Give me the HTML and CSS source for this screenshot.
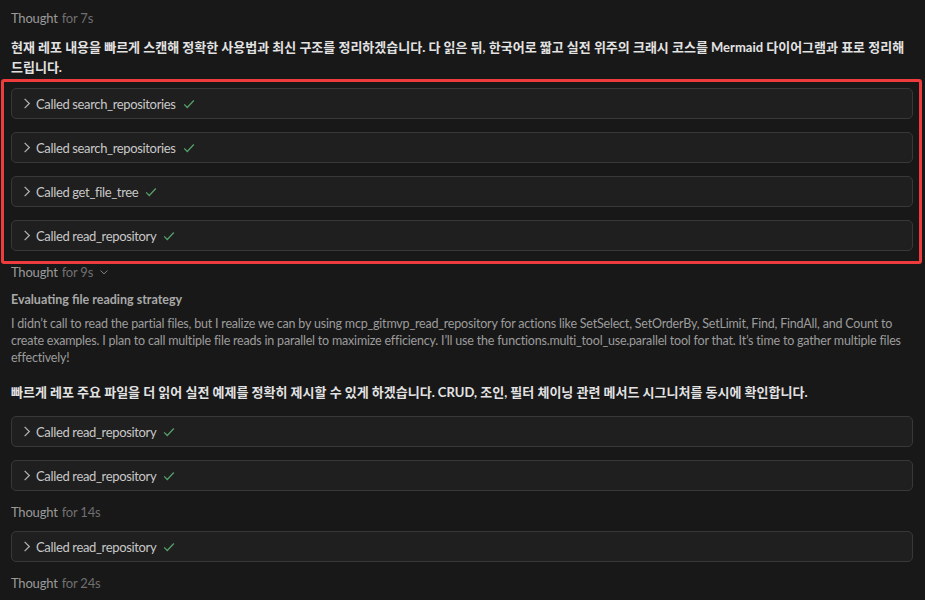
FILE: index.html
```html
<!DOCTYPE html>
<html lang="ko">
<head>
<meta charset="utf-8">
<link rel="stylesheet" href="styles.css">
</head>
<body>
<div class="chat">
  <div class="thought">Thought <span class="dur">for 7s</span></div>
  <p class="msg">현재 레포 내용을 빠르게 스캔해 정확한 사용법과 최신 구조를 정리하겠습니다. 다 읽은 뒤, 한국어로 짧고 실전 위주의 크래시 코스를 Mermaid 다이어그램과 표로 정리해 드립니다.</p>
  <div class="highlight">
    <div class="call"><svg class="chev" viewBox="0 0 16 16"><path d="M6 3 L11 8 L6 13"/></svg><span>Called search_repositories</span><svg class="check" viewBox="0 0 16 16"><path d="M2.5 8.5 L6 12 L13.5 4"/></svg></div>
    <div class="call"><svg class="chev" viewBox="0 0 16 16"><path d="M6 3 L11 8 L6 13"/></svg><span>Called search_repositories</span><svg class="check" viewBox="0 0 16 16"><path d="M2.5 8.5 L6 12 L13.5 4"/></svg></div>
    <div class="call"><svg class="chev" viewBox="0 0 16 16"><path d="M6 3 L11 8 L6 13"/></svg><span>Called get_file_tree</span><svg class="check" viewBox="0 0 16 16"><path d="M2.5 8.5 L6 12 L13.5 4"/></svg></div>
    <div class="call"><svg class="chev" viewBox="0 0 16 16"><path d="M6 3 L11 8 L6 13"/></svg><span>Called read_repository</span><svg class="check" viewBox="0 0 16 16"><path d="M2.5 8.5 L6 12 L13.5 4"/></svg></div>
  </div>
  <div class="thought">Thought <span class="dur">for 9s</span><svg class="down" viewBox="0 0 16 16"><path d="M3.5 6 L8 10.5 L12.5 6"/></svg></div>
  <div class="reason-title">Evaluating file reading strategy</div>
  <p class="reason">I didn’t call to read the partial files, but I realize we can by using mcp_gitmvp_read_repository for actions like SetSelect, SetOrderBy, SetLimit, Find, FindAll, and Count to create examples. I plan to call multiple file reads in parallel to maximize efficiency. I’ll use the functions.multi_tool_use.parallel tool for that. It’s time to gather multiple files effectively!</p>
  <p class="msg msg-2">빠르게 레포 주요 파일을 더 읽어 실전 예제를 정확히 제시할 수 있게 하겠습니다. CRUD, 조인, 필터 체이닝 관련 메서드 시그니처를 동시에 확인합니다.</p>
  <div class="call"><svg class="chev" viewBox="0 0 16 16"><path d="M6 3 L11 8 L6 13"/></svg><span>Called read_repository</span><svg class="check" viewBox="0 0 16 16"><path d="M2.5 8.5 L6 12 L13.5 4"/></svg></div>
  <div class="call"><svg class="chev" viewBox="0 0 16 16"><path d="M6 3 L11 8 L6 13"/></svg><span>Called read_repository</span><svg class="check" viewBox="0 0 16 16"><path d="M2.5 8.5 L6 12 L13.5 4"/></svg></div>
  <div class="thought">Thought <span class="dur">for 14s</span></div>
  <div class="call"><svg class="chev" viewBox="0 0 16 16"><path d="M6 3 L11 8 L6 13"/></svg><span>Called read_repository</span><svg class="check" viewBox="0 0 16 16"><path d="M2.5 8.5 L6 12 L13.5 4"/></svg></div>
  <div class="thought">Thought <span class="dur">for 24s</span></div>
</div>
</body>
</html>
```

FILE: styles.css
```css
html, body {
  margin: 0;
  padding: 0;
  background: #181818;
  height: 100%;
  overflow: hidden;
}
body {
  font-family: Lato, "Noto Sans CJK KR", sans-serif;
  color: #cccccc;
}
.chat {
  padding: 10px 12px 0 11px;
  display: flex;
  flex-direction: column;
}
.thought {
  font-size: 13px;
  line-height: 16px;
  letter-spacing: -0.2px;
  color: #9a9a9a;
  display: flex;
  align-items: center;
  margin-bottom: 11px;
}
.thought .dur {
  color: #6f6f6f;
  margin-left: 4px;
}
.down {
  width: 12px;
  height: 12px;
  margin-left: 5px;
  fill: none;
  stroke: #8a8a8a;
  stroke-width: 1.3;
}
.msg {
  margin: 0 0 2px;
  font-size: 13px;
  line-height: 20px;
  font-weight: 700;
  color: #e2e2e2;
}
.msg-2 {
  margin-bottom: 14px;
}
.highlight {
  margin: 0 -9px 0 -10px;
  border: 3px solid #ee3b3d;
  border-radius: 3px;
  padding: 6px 6px 10px 7px;
  display: flex;
  flex-direction: column;
  gap: 13px;
}
.highlight .call {
  margin-bottom: 0;
}
.call {
  height: 31px;
  flex: none;
  box-sizing: border-box;
  background: #1f1f1f;
  border: 1px solid #383838;
  border-radius: 5px;
  display: flex;
  align-items: center;
  padding-left: 7px;
  font-size: 13px;
  letter-spacing: -0.35px;
  color: #c8c8c8;
  margin-bottom: 13px;
}
.chev {
  width: 15px;
  height: 15px;
  fill: none;
  stroke: #b4b4b4;
  stroke-width: 1.3;
  margin-right: 2px;
}
.check {
  width: 14px;
  height: 14px;
  fill: none;
  stroke: #55a06a;
  stroke-width: 1.4;
  margin-left: 6px;
}
.reason-title {
  font-size: 12.5px;
  line-height: 17px;
  font-weight: 700;
  color: #a8a8a8;
  margin-bottom: 7px;
}
.reason {
  margin: 0 0 16px;
  font-size: 12.5px;
  line-height: 17px;
  letter-spacing: -0.2px;
  color: #9c9c9c;
}
```
